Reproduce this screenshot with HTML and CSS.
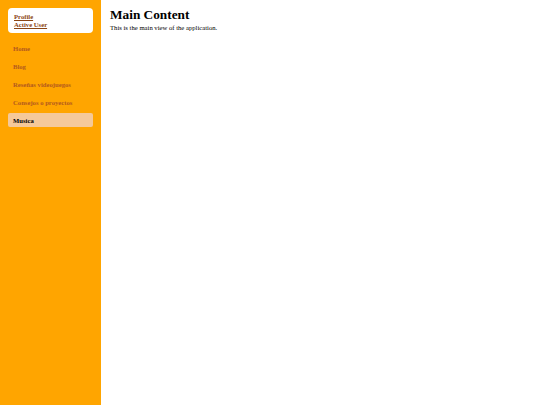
FILE: index.html
```html
<!DOCTYPE html>
<html>
<head>
<meta charset="utf-8">
<link rel="stylesheet" href="styles.css">
</head>
<body>
<div class="app">
  <aside class="sidebar">
    <div class="profile">
      <a href="#">Profile</a>
      <a href="#">Active User</a>
    </div>
    <nav class="nav">
      <a class="nav-item" href="#">Home</a>
      <a class="nav-item" href="#">Blog</a>
      <a class="nav-item" href="#">Reseñas videojuegos</a>
      <a class="nav-item" href="#">Consejos o proyectos</a>
      <a class="nav-item active" href="#">Musica</a>
    </nav>
  </aside>
  <main class="main">
    <h1>Main Content</h1>
    <p>This is the main view of the application.</p>
  </main>
</div>
</body>
</html>
```
FILE: styles.css
```css
html, body {
  margin: 0;
  padding: 0;
  height: 100%;
}
body {
  font-family: "Liberation Serif", "Times New Roman", serif;
  background: #ffffff;
}
.app {
  display: flex;
  height: 100%;
}
.sidebar {
  width: 85px;
  padding: 8px;
  background: #ffa500;
  flex-shrink: 0;
}
.profile {
  background: #ffffff;
  border-radius: 4px;
  padding: 5px 6px;
  display: flex;
  flex-direction: column;
  margin-bottom: 8px;
}
.profile a {
  font-size: 6.67px;
  font-weight: bold;
  line-height: 7.5px;
  color: #8b4513;
}
.nav {
  display: flex;
  flex-direction: column;
  gap: 4px;
}
.nav-item {
  font-size: 6.67px;
  font-weight: bold;
  line-height: 8px;
  padding: 3.5px 5px 2.5px;
  color: #b35a1f;
  text-decoration: none;
  border-radius: 2px;
}
.nav-item.active {
  background: #f5c99a;
  color: #000000;
}
.main {
  flex: 1;
  padding: 0 9px;
}
.main h1 {
  font-size: 13.3px;
  margin: 7px 0 0;
  line-height: 16px;
}
.main p {
  font-size: 6.67px;
  margin: 1px 0 0;
  line-height: 8px;
}
```
